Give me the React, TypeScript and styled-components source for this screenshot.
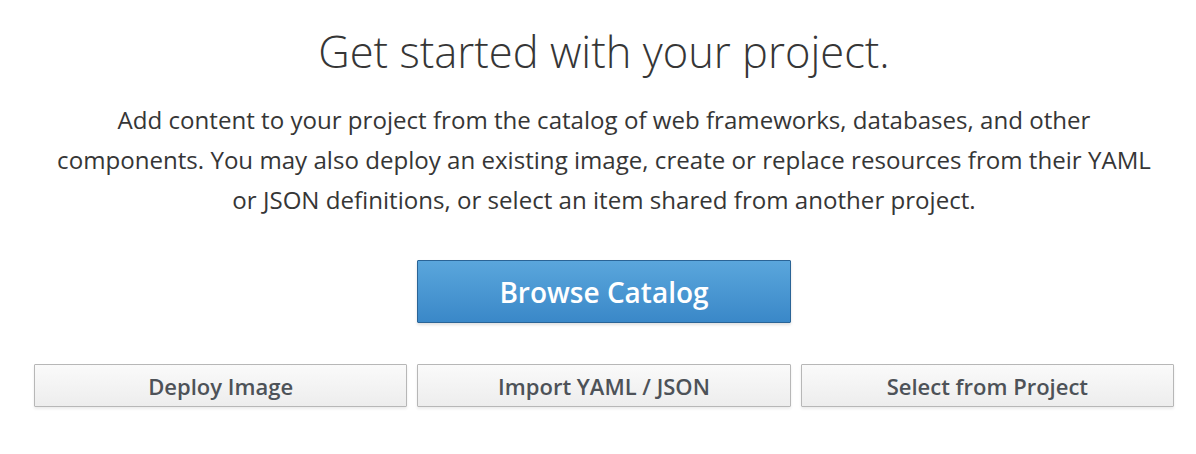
import React from "react";
import styled, { createGlobalStyle } from "styled-components";

const GlobalStyle = createGlobalStyle`
  html, body { margin: 0; padding: 0; background: #ffffff; }
  body { font-family: "Open Sans", "Noto Sans", sans-serif; color: #363636; }
`;

const Page = styled.div`
  box-sizing: border-box;
  width: 1196px;
  height: 454px;
  padding: 0 22px 0 34px;
  display: flex;
  flex-direction: column;
  align-items: center;
`;

const Title = styled.h1`
  margin: 25px 0 0;
  font-size: 43.5px;
  font-weight: 300;
  line-height: 54px;
  color: #363636;
  text-align: center;
`;

const Lead = styled.p`
  margin: 21px 0 0;
  max-width: 1140px;
  font-size: 24.1px;
  font-weight: 400;
  line-height: 40px;
  color: #363636;
  text-align: center;
`;

const Grid = styled.div`
  width: 100%;
  display: grid;
  grid-template-columns: repeat(3, 1fr);
  column-gap: 10px;
`;

const PrimaryRow = styled(Grid)`
  margin-top: 40px;
`;

const SecondaryRow = styled(Grid)`
  margin-top: 41px;
`;

const BaseButton = styled.button`
  box-sizing: border-box;
  width: 100%;
  font-family: "Open Sans", "Noto Sans", sans-serif;
  font-weight: 600;
  cursor: pointer;
`;

const PrimaryButton = styled(BaseButton)`
  grid-column: 2;
  height: 63px;
  font-size: 28px;
  color: #ffffff;
  border: 1px solid #2a6496;
  border-radius: 1px;
  background: linear-gradient(to bottom, #5aa6dc 0%, #3a88c8 100%);
  box-shadow: 0 2px 3px rgba(0, 0, 0, 0.12);
`;

const DefaultButton = styled(BaseButton)`
  height: 43px;
  font-size: 22px;
  color: #4d5258;
  border: 1px solid #b7b7b7;
  border-radius: 1px;
  background: linear-gradient(to bottom, #fafafa 0%, #ededed 100%);
  box-shadow: 0 2px 3px rgba(0, 0, 0, 0.08);
`;

export default function App() {
  return (
    <>
      <GlobalStyle />
      <Page>
        <Title>Get started with your project.</Title>
        <Lead>
          Add content to your project from the catalog of web frameworks, databases, and other
          <br />
          components. You may also deploy an existing image, create or replace resources from their YAML
          <br />
          or JSON definitions, or select an item shared from another project.
        </Lead>
        <PrimaryRow>
          <PrimaryButton>Browse Catalog</PrimaryButton>
        </PrimaryRow>
        <SecondaryRow>
          <DefaultButton>Deploy Image</DefaultButton>
          <DefaultButton>Import YAML / JSON</DefaultButton>
          <DefaultButton>Select from Project</DefaultButton>
        </SecondaryRow>
      </Page>
    </>
  );
}
